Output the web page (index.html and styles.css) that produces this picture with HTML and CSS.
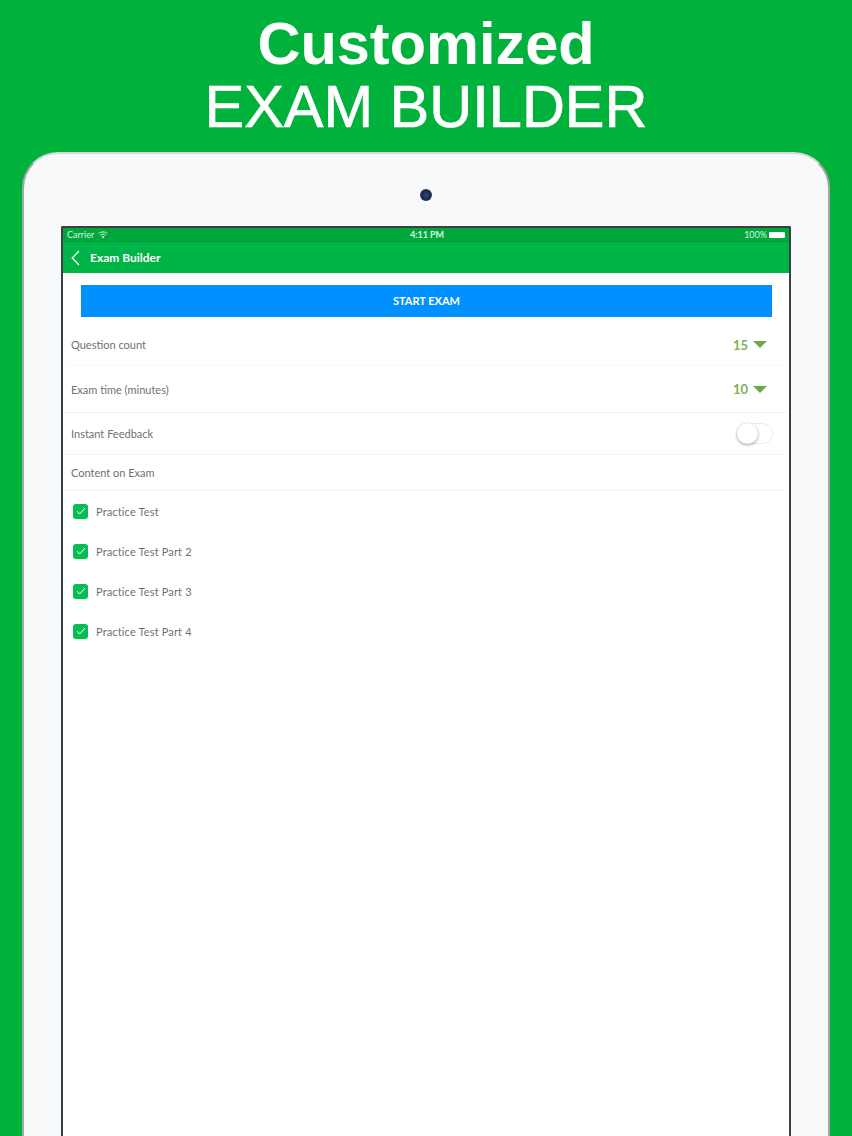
FILE: index.html
```html
<!DOCTYPE html>
<html>
  <head>
    <meta http-equiv="Content-Type" content="text/html; charset=UTF-8">
    <title>Exam Builder</title>
    <link rel="stylesheet" href="styles.css">
  </head>
  <body>
    <h1 class="titulo"><b>Customized</b><br><span class="titulo-2">EXAM BUILDER</span></h1>

    <div class="tablet">
      <div class="camara"></div>
      <div class="pantalla">
        <div class="estado">
          <div class="estado-izq">
            Carrier
            <svg class="wifi" width="10" height="8" viewBox="0 0 10 8">
              <path d="M0.6 2.6C3 0.4 7 0.4 9.4 2.6" fill="none" stroke="#d8f5e2" stroke-width="1"/>
              <path d="M2.2 4.2C3.7 2.9 6.3 2.9 7.8 4.2" fill="none" stroke="#d8f5e2" stroke-width="1"/>
              <path d="M3.4 5.6L5 7.4L6.6 5.6C5.7 4.8 4.3 4.8 3.4 5.6Z" fill="#d8f5e2"/>
            </svg>
          </div>
          <div class="estado-hora">4:11 PM</div>
          <div class="estado-der">
            100%
            <span class="bateria"></span>
          </div>
        </div>

        <div class="barra">
          <svg class="atras" width="9" height="16" viewBox="0 0 9 16">
            <path d="M8 1L1.2 8L8 15" fill="none" stroke="#fff" stroke-width="1.3"/>
          </svg>
          <span class="barra-titulo">Exam Builder</span>
        </div>

        <div class="contenido">
          <div class="boton">START EXAM</div>

          <div class="fila fila-count">
            <span>Question count</span>
            <span class="selector">15 <i class="flecha"></i></span>
          </div>
          <div class="fila fila-time">
            <span>Exam time (minutes)</span>
            <span class="selector">10 <i class="flecha"></i></span>
          </div>
          <div class="fila fila-feedback">
            <span>Instant Feedback</span>
            <span class="interruptor"><i class="perilla"></i></span>
          </div>
          <div class="fila fila-content">
            <span>Content on Exam</span>
          </div>

          <div class="lista">
            <div class="opcion">
              <span class="check"><svg width="10" height="8" viewBox="0 0 10 8"><path d="M1 4.2L3.6 7L9 1" fill="none" stroke="#fff" stroke-width="1"/></svg></span>
              Practice Test
            </div>
            <div class="opcion">
              <span class="check"><svg width="10" height="8" viewBox="0 0 10 8"><path d="M1 4.2L3.6 7L9 1" fill="none" stroke="#fff" stroke-width="1"/></svg></span>
              Practice Test Part 2
            </div>
            <div class="opcion">
              <span class="check"><svg width="10" height="8" viewBox="0 0 10 8"><path d="M1 4.2L3.6 7L9 1" fill="none" stroke="#fff" stroke-width="1"/></svg></span>
              Practice Test Part 3
            </div>
            <div class="opcion">
              <span class="check"><svg width="10" height="8" viewBox="0 0 10 8"><path d="M1 4.2L3.6 7L9 1" fill="none" stroke="#fff" stroke-width="1"/></svg></span>
              Practice Test Part 4
            </div>
          </div>
        </div>
      </div>
    </div>
  </body>
</html>
```

FILE: styles.css
```css
html, body {
  margin: 0;
  height: 1136px;
  overflow: hidden;
}

body {
  background: #00b13b;
  font-family: "Lato", "Liberation Sans", sans-serif;
}

.titulo {
  margin: 0;
  height: 152px;
  padding-top: 12px;
  box-sizing: border-box;
  text-align: center;
  color: #fff;
  font-family: "Liberation Sans", sans-serif;
  font-size: 59.5px;
  font-weight: normal;
  line-height: 63px;
}

.titulo-2 {
  -webkit-text-stroke: 0.7px #fff;
}

.tablet {
  margin: 0 22px;
  height: 984px;
  box-sizing: border-box;
  padding: 72px 37px 0 37px;
  background: #f8f9fb;
  border: 2px solid #a4a8aa;
  border-top-color: #d5d7d8;
  border-bottom: 0;
  border-radius: 36px 36px 0 0;
  position: relative;
}

.camara {
  position: absolute;
  left: 396px;
  top: 35px;
  width: 12px;
  height: 12px;
  border-radius: 50%;
  background: radial-gradient(circle, #2b4a9a 0, #1e2a4a 45%, #3c4148 100%);
}

.pantalla {
  height: 910px;
  box-sizing: border-box;
  border: 2px solid #3b4045;
  border-bottom: 0;
  border-radius: 2px 2px 0 0;
  background: #fff;
}

.estado {
  height: 13px;
  padding: 0 4px;
  display: flex;
  justify-content: space-between;
  align-items: center;
  background: #00a83c;
  border-bottom: 1px solid #019a38;
  color: #d8f5e2;
  font-size: 9px;
}

.estado-izq, .estado-der {
  width: 120px;
  display: flex;
  align-items: center;
  gap: 4px;
}

.estado-der {
  justify-content: flex-end;
  gap: 2px;
}

.estado-hora {
  font-weight: 700;
  margin-left: 2px;
}

.bateria {
  width: 16px;
  height: 6px;
  background: #fff;
  border-radius: 1px;
}

.barra {
  height: 31px;
  padding-left: 8px;
  display: flex;
  align-items: center;
  background: #00b548;
}

.barra-titulo {
  margin-left: 10px;
  color: #fff;
  font-size: 12px;
  font-weight: 700;
}

.contenido {
  color: #6d7175;
  font-size: 11px;
}

.boton {
  margin: 12px 17px 0 18px;
  height: 31px;
  padding-bottom: 1px;
  display: flex;
  align-items: center;
  justify-content: center;
  background: #0090ff;
  color: #fff;
  font-size: 11px;
  font-weight: 700;
}

.fila {
  margin: 0 2px;
  padding: 0 20px 0 6px;
  display: flex;
  justify-content: space-between;
  align-items: center;
  border-bottom: 1px solid #f1f2f3;
}

.fila-count {
  height: 41px;
  padding-top: 7px;
  border-bottom-color: #f9f9fa;
}

.fila-time {
  height: 46px;
}

.fila-feedback {
  height: 41px;
}

.fila-content {
  height: 35px;
}

.selector {
  display: flex;
  align-items: center;
  gap: 5px;
  color: #7fae5a;
  font-size: 13px;
  font-weight: 700;
}

.flecha {
  width: 0;
  height: 0;
  border-left: 7px solid transparent;
  border-right: 7px solid transparent;
  border-top: 7px solid #6ca94a;
}

.interruptor {
  width: 36px;
  height: 21px;
  box-sizing: border-box;
  border: 1px solid #ececec;
  border-radius: 11px;
  margin-right: -6px;
  position: relative;
  background: #fff;
}

.perilla {
  position: absolute;
  left: -1px;
  top: -1px;
  width: 21px;
  height: 21px;
  border-radius: 50%;
  background: #fff;
  box-shadow: 0 1px 3px rgba(0, 0, 0, 0.4);
}

.lista {
  padding: 0 0 0 10px;
  letter-spacing: 0.15px;
}

.opcion {
  height: 40px;
  display: flex;
  align-items: center;
  gap: 8px;
}

.check {
  width: 15px;
  height: 15px;
  display: flex;
  align-items: center;
  justify-content: center;
  background: #06bd52;
  border-radius: 3px;
}
```
